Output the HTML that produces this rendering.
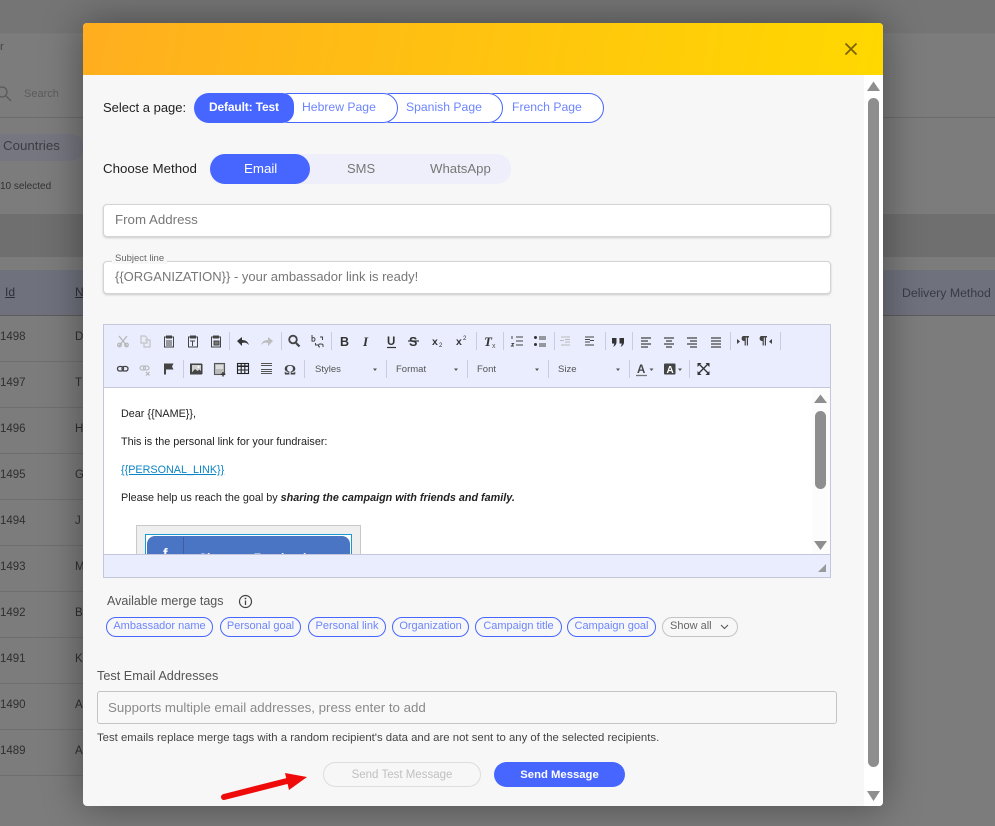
<!DOCTYPE html>
<html><head><meta charset="utf-8">
<style>
html,body{margin:0;padding:0;width:995px;height:826px;overflow:hidden;background:#7c7c7c;font-family:"Liberation Sans",sans-serif}
.a{position:absolute;white-space:nowrap}
.row{position:absolute;left:0;width:83px;height:1px;background:#6f6f6f}
.bg{color:#2f2f2f;font-size:11.5px}
.pill{position:absolute;top:93px;height:30px;border:1px solid #4766ff;background:#fff;border-radius:15px;box-sizing:border-box}
.pt{position:absolute;font-size:12.2px;color:#6d85ff;top:100px;white-space:nowrap}
.inp{position:absolute;box-sizing:border-box;background:#fff;border:1px solid #d4d4d4;border-radius:4px;box-shadow:0 1px 2px rgba(0,0,0,.18)}
.tag{position:absolute;top:617px;height:20px;box-sizing:border-box;border:1px solid #4766ff;border-radius:10px;color:#6d85ff;font-size:11px;line-height:17px;text-align:center;white-space:nowrap;background:#f7f7f7}
.sep{position:absolute;width:1px;height:18px;background:#c9cce0}
.tb{position:absolute;font-size:9.5px;color:#555}
.ct{position:absolute;left:121px;font-size:10.8px;color:#222;white-space:nowrap}
</style></head>
<body>
<!-- background page -->
<div class="a" style="left:0;top:0;width:995px;height:33px;background:#757575"></div>
<div class="a" style="left:0;top:33px;width:995px;height:1px;background:#7a7a7a"></div>
<div class="a bg" style="left:0;top:41px;font-size:11px;color:#444">r</div>
<svg class="a" style="left:0;top:84px" width="14" height="20"><circle cx="2" cy="8" r="5" fill="none" stroke="#5a5a5a" stroke-width="1.3"/><path d="M6 12l5 5" stroke="#5a5a5a" stroke-width="1.4"/></svg>
<div class="a" style="left:24px;top:88px;font-size:11px;color:#5c5c5c">Search</div>
<div class="a" style="left:0;top:117px;width:995px;height:1px;background:#6c6c6c"></div>
<div class="a" style="left:0;top:134px;width:83px;height:27px;background:#767680;border-radius:0 12px 12px 0"></div>
<div class="a" style="left:3px;top:138px;font-size:13.3px;color:#3c3c44">Countries</div>
<div class="a" style="left:0;top:181px;font-size:10px;color:#333">10 selected</div>
<div class="a" style="left:0;top:214px;width:995px;height:43px;background:#6f6f6f"></div>
<div class="a" style="left:0;top:270px;width:995px;height:45px;background:#6f717d"></div>
<div class="a" style="left:0;top:315px;width:995px;height:1px;background:#5c5c5c"></div>
<div class="a" style="left:5px;top:285px;font-size:12px;color:#303038;text-decoration:underline">Id</div>
<div class="a" style="left:75px;top:285px;font-size:12px;color:#303038;text-decoration:underline">N</div>
<div class="a" style="left:902px;top:286px;font-size:12.3px;color:#3a3a42">Delivery Method</div>
<div class="a bg" style="left:0;top:331px">1498</div><div class="a bg" style="left:75px;top:331px">D</div>
<div class="row" style="top:361px"></div>
<div class="a bg" style="left:0;top:377px">1497</div><div class="a bg" style="left:75px;top:377px">T</div>
<div class="row" style="top:407px"></div>
<div class="a bg" style="left:0;top:423px">1496</div><div class="a bg" style="left:75px;top:423px">H</div>
<div class="row" style="top:453px"></div>
<div class="a bg" style="left:0;top:469px">1495</div><div class="a bg" style="left:75px;top:469px">G</div>
<div class="row" style="top:499px"></div>
<div class="a bg" style="left:0;top:515px">1494</div><div class="a bg" style="left:75px;top:515px">J</div>
<div class="row" style="top:545px"></div>
<div class="a bg" style="left:0;top:561px">1493</div><div class="a bg" style="left:75px;top:561px">M</div>
<div class="row" style="top:591px"></div>
<div class="a bg" style="left:0;top:607px">1492</div><div class="a bg" style="left:75px;top:607px">B</div>
<div class="row" style="top:637px"></div>
<div class="a bg" style="left:0;top:653px">1491</div><div class="a bg" style="left:75px;top:653px">K</div>
<div class="row" style="top:683px"></div>
<div class="a bg" style="left:0;top:699px">1490</div><div class="a bg" style="left:75px;top:699px">A</div>
<div class="row" style="top:729px"></div>
<div class="a bg" style="left:0;top:745px">1489</div><div class="a bg" style="left:75px;top:745px">A</div>
<div class="row" style="top:775px"></div>

<!-- modal -->
<div class="a" style="left:83px;top:23px;width:800px;height:783px;background:#f7f7f7;border-radius:4px;box-shadow:0 0 40px rgba(0,0,0,.4);overflow:hidden">
  <div style="height:52px;background:linear-gradient(100deg,#ffae1f 0%,#ffd800 100%)"></div>
  <div style="position:absolute;left:781px;top:52px;width:19px;bottom:0;background:#fff"></div>
</div>
<svg class="a" style="left:844px;top:42px" width="14" height="14"><path d="M1.500 1.500l11 11M12.500 1.500l-11 11" stroke="#7a6206" stroke-width="1.800"/></svg>
<!-- modal scrollbar -->
<svg class="a" style="left:866px;top:80px" width="16" height="724">
<path d="M1 11L7.500 1.500 14 11z" fill="#8e8e8e"/>
<rect x="2" y="18" width="11" height="669" rx="5.500" fill="#8e8e8e"/>
<path d="M1 711L7.500 721 14 711z" fill="#8e8e8e"/>
</svg>

<!-- page select -->
<div class="a" style="left:103px;top:100px;font-size:13px;color:#222">Select a page:</div>
<div class="pill" style="left:480px;width:124px"></div>
<div class="pill" style="left:376px;width:127px"></div>
<div class="pill" style="left:274px;width:124px"></div>
<div class="a" style="left:194px;top:93px;width:100px;height:30px;box-sizing:border-box;background:#4766ff;border-radius:15px 12px 12px 15px"></div>
<div class="pt" style="left:209px;color:#fff;font-weight:bold;font-size:12px;letter-spacing:-.15px;top:100px">Default: Test</div>
<div class="pt" style="left:302px">Hebrew Page</div>
<div class="pt" style="left:406px">Spanish Page</div>
<div class="pt" style="left:512px">French Page</div>

<!-- method -->
<div class="a" style="left:103px;top:161px;font-size:13.3px;color:#222">Choose Method</div>
<div class="a" style="left:210px;top:154px;width:301px;height:30px;background:#efeffb;border-radius:12px 14px 14px 12px"></div>
<div class="a" style="left:210px;top:154px;width:100px;height:30px;background:#4766ff;border-radius:15px"></div>
<div class="a" style="left:244px;top:161px;font-size:13.300px;color:#fff">Email</div>
<div class="a" style="left:347px;top:161px;font-size:13px;color:#777">SMS</div>
<div class="a" style="left:430px;top:161px;font-size:13.200px;color:#777">WhatsApp</div>

<!-- inputs -->
<div class="inp" style="left:103px;top:204px;width:728px;height:33px"></div>
<div class="a" style="left:115px;top:212px;font-size:13.300px;color:#777">From Address</div>
<div class="inp" style="left:103px;top:261px;width:728px;height:33px"></div>
<div class="a" style="left:112px;top:253px;font-size:9.500px;color:#666;background:#f7f7f7;padding:0 3px">Subject line</div>
<div class="a" style="left:115px;top:269px;font-size:13px;color:#777">{{ORGANIZATION}} - your ambassador link is ready!</div>

<!-- editor -->
<div class="a" style="left:103px;top:324px;width:728px;height:254px;box-sizing:border-box;border:1px solid #c4c7db;background:#fff"></div>
<div class="a" style="left:104px;top:325px;width:726px;height:62px;background:#e9edfd;border-bottom:1px solid #c4c7db"></div>

<!-- toolbar row separators -->
<div class="sep" style="left:229px;top:332px"></div><div class="sep" style="left:281px;top:332px"></div><div class="sep" style="left:331px;top:332px"></div><div class="sep" style="left:476px;top:332px"></div><div class="sep" style="left:503px;top:332px"></div><div class="sep" style="left:554px;top:332px"></div><div class="sep" style="left:605px;top:332px"></div><div class="sep" style="left:632px;top:332px"></div><div class="sep" style="left:730px;top:332px"></div><div class="sep" style="left:780px;top:332px"></div>
<div class="sep" style="left:183px;top:360px"></div><div class="sep" style="left:304px;top:360px"></div><div class="sep" style="left:386px;top:360px"></div><div class="sep" style="left:467px;top:360px"></div><div class="sep" style="left:548px;top:360px"></div><div class="sep" style="left:629px;top:360px"></div><div class="sep" style="left:689px;top:360px"></div>

<svg class="a" style="left:104px;top:325px" width="726" height="62" fill="none" stroke="#444" stroke-width="1.200">
<!-- row 1; origin offset (104,325) -->
<g stroke="#b5b5b5"><path d="M15 11l8 10M23 11l-8 10"/><circle cx="15.500" cy="20" r="1.800"/><circle cx="22.500" cy="20" r="1.800"/></g>
<g stroke="#c4c4c4"><path d="M37 11h4l2 2v5h-6zM41 15h5v7h-6v-4"/></g>
<g stroke-width="1"><rect x="60.500" y="12" width="9" height="10"/><path d="M62.500 11h5v2h-5zM62 16h6M62 18h6M62 20h6"/></g>
<g stroke-width="1"><rect x="84.500" y="12" width="9" height="10"/><path d="M86.500 11h5v2h-5zM86 16h5M88.500 16v5"/></g>
<g stroke-width="1"><rect x="107.500" y="12" width="9" height="10"/><path d="M109.500 11h5v2h-5z"/><rect x="110" y="16" width="5" height="4" fill="#777"/></g>
<path d="M133 16l5-4v3c4 0 6 2 7 5-2-2-4-3-7-2v3z" fill="#333" stroke="none"/>
<path d="M169 16l-5-4v3c-4 0-6 2-7 5 2-2 4-3 7-2v3z" fill="#bdbdbd" stroke="none"/>
<circle cx="189" cy="14.500" r="3.800" stroke-width="1.800"/><path d="M192 18l3.500 3.500" stroke-width="2.200"/>
<path d="M208 10v6h1M208 13c2-1 3 0 3 1.500s-1 2-3 1.500M216 12h2.500v3M214 20h-2.500v-2M216 22c-2 0-2-3 0-3s3 0 3 1v2" stroke-width="1"/>
<text x="236" y="21" font-family="Liberation Sans" font-weight="bold" font-size="12.500" fill="#333" stroke="none">B</text>
<text x="259" y="21" font-family="Liberation Serif" font-weight="bold" font-style="italic" font-size="13" fill="#333" stroke="none">I</text>
<text x="283" y="20" font-family="Liberation Sans" font-weight="bold" font-size="11.500" fill="#333" stroke="none">U</text><path d="M283 22.500h9" stroke="#333"/>
<text x="305" y="21" font-family="Liberation Sans" font-weight="bold" font-size="12.500" fill="#333" stroke="none">S</text><path d="M304 16h11" stroke="#333"/>
<text x="328" y="20" font-family="Liberation Sans" font-weight="bold" font-size="10.500" fill="#333" stroke="none">x</text><text x="335" y="22" font-family="Liberation Sans" font-size="6" fill="#333" stroke="none">2</text>
<text x="352" y="20" font-family="Liberation Sans" font-weight="bold" font-size="10.500" fill="#333" stroke="none">x</text><text x="359" y="15" font-family="Liberation Sans" font-size="6" fill="#333" stroke="none">2</text>
<text x="380" y="21" font-family="Liberation Serif" font-weight="bold" font-style="italic" font-size="13" fill="#333" stroke="none">T</text><text x="388" y="23" font-family="Liberation Sans" font-size="7" fill="#555" stroke="none">x</text>
<g stroke-width="1"><path d="M412 12h7M412 16h7M412 20h7"/><path d="M408 11v3M407.500 18.500h2l-2 2.500h2.500"/></g>
<g><circle cx="431.500" cy="12.500" r="1.500" fill="#333" stroke="none"/><circle cx="431.500" cy="19.500" r="1.500" fill="#333" stroke="none"/><path d="M435 12h7M435 14h7M435 19h7M435 21h7" stroke-width=".9"/></g>
<g stroke="#bbb" stroke-width="1"><path d="M457 12h9M461 14.500h5M461 17h5M457 20h9M456 15.500h4"/></g>
<g stroke-width="1"><path d="M481 12h9M481 14.500h5M481 17h5M481 20h9M486 15.500h4"/></g>
<path d="M508 13h4.500v4c0 2.200-1.200 4-3.500 4.800 .8-1 1.200-2 1.200-3.300H508zM515.500 13h4.500v4c0 2.200-1.200 4-3.500 4.800 .8-1 1.200-2 1.200-3.300h-2.200z" fill="#333" stroke="none"/>
<g stroke-width="1.300"><path d="M537 13h10M537 16h7M537 19h10M537 22h7"/><path d="M560 13h10M562 16h6M560 19h10M562 22h6"/><path d="M583 13h10M586 16h7M583 19h10M586 22h7"/><path d="M607 13h10M607 16h10M607 19h10M607 22h10"/></g>
<g fill="#444" stroke="none"><path d="M633 14l3 2.500-3 2.500z"/><path d="M639 11h6v1.500h-1v8h-1.200v-8h-1v8h-1.200v-4.500c-2 0-3-1-3-2.500s1-2.500 1.400-2.500z"/></g>
<g fill="#444" stroke="none"><path d="M657 11h6v1.500h-1v8h-1.200v-8h-1v8h-1.200v-4.500c-2 0-3-1-3-2.500s1-2.500 1.400-2.500z"/><path d="M668 14l-3 2.500 3 2.500z"/></g>
<!-- row 2 -->
<g stroke-width="1.300"><rect x="13.500" y="41.500" width="6" height="4.500" rx="2.200"/><rect x="18" y="41.500" width="6" height="4.500" rx="2.200"/></g>
<g stroke="#b5b5b5" stroke-width="1.100"><rect x="36" y="41" width="5.500" height="4" rx="2"/><rect x="39.500" y="41" width="5.500" height="4" rx="2"/><path d="M42 47l3.500 3.500M45.500 47L42 50.500"/></g>
<path d="M60 38.500h9.500l-1.500 3 1.500 3H62v5h-2z" fill="#444" stroke="none"/>
<g stroke-width="1"><rect x="87.500" y="39.500" width="10.500" height="9" fill="#fff"/><path d="M87.500 48l3.500-4 2.500 2 2-1.500 3 3.500z" fill="#444" stroke="none"/><rect x="86.500" y="39" width="11" height="10" fill="#444" fill-opacity=".25" stroke="#444"/><circle cx="94.500" cy="42" r="1" fill="#fff" stroke="none"/></g>
<g stroke-width="1.100"><rect x="110.500" y="38.500" width="10" height="11" fill="#bbb" stroke="#555"/><path d="M112 41h7M112 43h7" stroke="#fff"/><path d="M119 47v4.500M116.700 49.300h4.600" stroke="#333" stroke-width="1.400"/></g>
<g stroke-width="1.100" stroke="#222"><rect x="133.500" y="38.500" width="11" height="10"/><path d="M133.500 41h11M133.500 41.500h11M133.500 45h11M137.200 39v9M140.800 39v9"/></g>
<g stroke-width="1" stroke="#555"><path d="M157 38.500h11M157 40.500h11M157 44.500h11M157 46.500h11M157 48.500h11"/></g>
<text x="180" y="49.500" font-family="Liberation Serif" font-weight="bold" font-size="15" fill="#444" stroke="none">Ω</text>
<g fill="#555" stroke="none"><path d="M269 43.500h4l-2 2.500z"/><path d="M350 43.500h4l-2 2.500z"/><path d="M431 43.500h4l-2 2.500z"/><path d="M512 43.500h4l-2 2.500z"/><path d="M545.500 43.500h4l-2 2.500z"/><path d="M574 43.500h4l-2 2.500z"/></g>
<text x="533" y="48" font-family="Liberation Sans" font-weight="bold" font-size="11.500" fill="#444" stroke="none">A</text><path d="M532 50.500h11" stroke="#777" stroke-width="1.300"/>
<rect x="560" y="38.500" width="11.500" height="11" rx="1" fill="#444" stroke="none"/><text x="562.500" y="48" font-family="Liberation Sans" font-weight="bold" font-size="10" fill="#fff" stroke="none">A</text>
<g stroke="#333" stroke-width="1.300"><path d="M595 39l9 9M604 39l-9 9"/></g><g fill="#333" stroke="none"><path d="M593.500 38h4l-4 4zM605.500 38v4l-4-4zM593.500 50v-4l4 4zM605.500 50h-4l4-4z"/></g>
</svg>
<div class="tb" style="left:315px;top:364px">Styles</div>
<div class="tb" style="left:396px;top:364px">Format</div>
<div class="tb" style="left:477px;top:364px">Font</div>
<div class="tb" style="left:558px;top:364px">Size</div>

<!-- editor content -->
<div class="ct" style="top:408px">Dear {{NAME}},</div>
<div class="ct" style="top:436px">This is the personal link for your fundraiser:</div>
<div class="ct" style="top:464px;color:#0b84c6;text-decoration:underline">{{PERSONAL_LINK}}</div>
<div class="ct" style="top:492px">Please help us reach the goal by <b><i>sharing the campaign with friends and family.</i></b></div>
<div class="a" style="left:136px;top:525px;width:225px;height:30px;box-sizing:border-box;background:#efefef;border:1px solid #c9c9c9;border-bottom:0;overflow:hidden">
  <div style="position:absolute;left:8px;top:8px;width:207px;height:30px;box-sizing:border-box;border:1px solid #1b9ad1;background:#fff"></div>
  <div style="position:absolute;left:10px;top:10px;width:203px;height:30px;background:#4a75c4;border-radius:8px 8px 0 0"></div>
  <div style="position:absolute;left:46px;top:11px;width:1px;height:20px;background:#3b5f9f"></div>
  <div style="position:absolute;left:26px;top:19px;color:#fff;font-weight:bold;font-size:14px">f</div>
  <div style="position:absolute;left:62px;top:25px;color:#fff;font-weight:bold;font-size:12px;white-space:nowrap">Share on Facebook</div>
</div>
<!-- editor status bar (after content so it clips) -->
<div class="a" style="left:104px;top:554px;width:726px;height:23px;box-sizing:border-box;background:#e9edfd;border-top:1px solid #c4c7db"></div>
<!-- editor scrollbar -->
<div class="a" style="left:812px;top:388px;width:18px;height:166px;background:#fcfcfc"></div>
<svg class="a" style="left:813px;top:392px" width="16" height="160">
<path d="M1 11L7.500 2.500 14 11z" fill="#8e8e8e"/>
<rect x="2" y="19" width="11" height="78" rx="5.500" fill="#8e8e8e"/>
<path d="M1 149L7.500 158 14 149z" fill="#8e8e8e"/>
</svg>
<svg class="a" style="left:817px;top:563px" width="10" height="10"><path d="M9 1v8H1z" fill="#9a9a9a"/></svg>

<!-- merge tags -->
<div class="a" style="left:107px;top:594px;font-size:12.500px;color:#555">Available merge tags</div>
<svg class="a" style="left:238px;top:594px" width="15" height="15" fill="none"><circle cx="7.500" cy="7.500" r="6" stroke="#444" stroke-width="1.200"/><path d="M7.500 6.500v4.500" stroke="#444" stroke-width="1.300"/><circle cx="7.500" cy="4.500" r=".9" fill="#444"/></svg>
<div class="tag" style="left:106px;width:107px">Ambassador name</div>
<div class="tag" style="left:220px;width:81px">Personal goal</div>
<div class="tag" style="left:308px;width:78px">Personal link</div>
<div class="tag" style="left:392px;width:77px">Organization</div>
<div class="tag" style="left:475px;width:87px">Campaign title</div>
<div class="tag" style="left:567px;width:89px">Campaign goal</div>
<div class="tag" style="left:662px;width:76px;border-color:#c4c4c4;color:#666;text-align:left;padding-left:7px">Show all</div>
<svg class="a" style="left:720px;top:623px" width="9" height="8" fill="none"><path d="M1 2l3.500 3.500L8 2" stroke="#555" stroke-width="1.100"/></svg>

<!-- test emails -->
<div class="a" style="left:97px;top:669px;font-size:12.700px;color:#555">Test Email Addresses</div>
<div class="a" style="left:97px;top:691px;width:740px;height:33px;box-sizing:border-box;border:1px solid #c4c4c4;border-radius:3px;background:#f8f8f8"></div>
<div class="a" style="left:108px;top:700px;font-size:13.300px;color:#8a8a8a">Supports multiple email addresses, press enter to add</div>
<div class="a" style="left:97px;top:732px;font-size:11.360px;color:#444">Test emails replace merge tags with a random recipient's data and are not sent to any of the selected recipients.</div>

<!-- buttons -->
<div class="a" style="left:323px;top:762px;width:158px;height:25px;box-sizing:border-box;border:1px solid #ddd;border-radius:13px;color:#c0c0c0;font-size:11.500px;line-height:24px;text-align:center">Send Test Message</div>
<div class="a" style="left:494px;top:762px;width:131px;height:25px;background:#4766ff;border-radius:13px;color:#fff;font-size:11.300px;font-weight:bold;line-height:26px;text-align:center">Send Message</div>

<!-- red arrow -->
<svg class="a" style="left:215px;top:765px" width="100" height="40"><path d="M9 32L72 16" stroke="#f00b0b" stroke-width="6" stroke-linecap="round"/><path d="M70 8L92 12 74 25z" fill="#f00b0b"/></svg>
</body></html>
